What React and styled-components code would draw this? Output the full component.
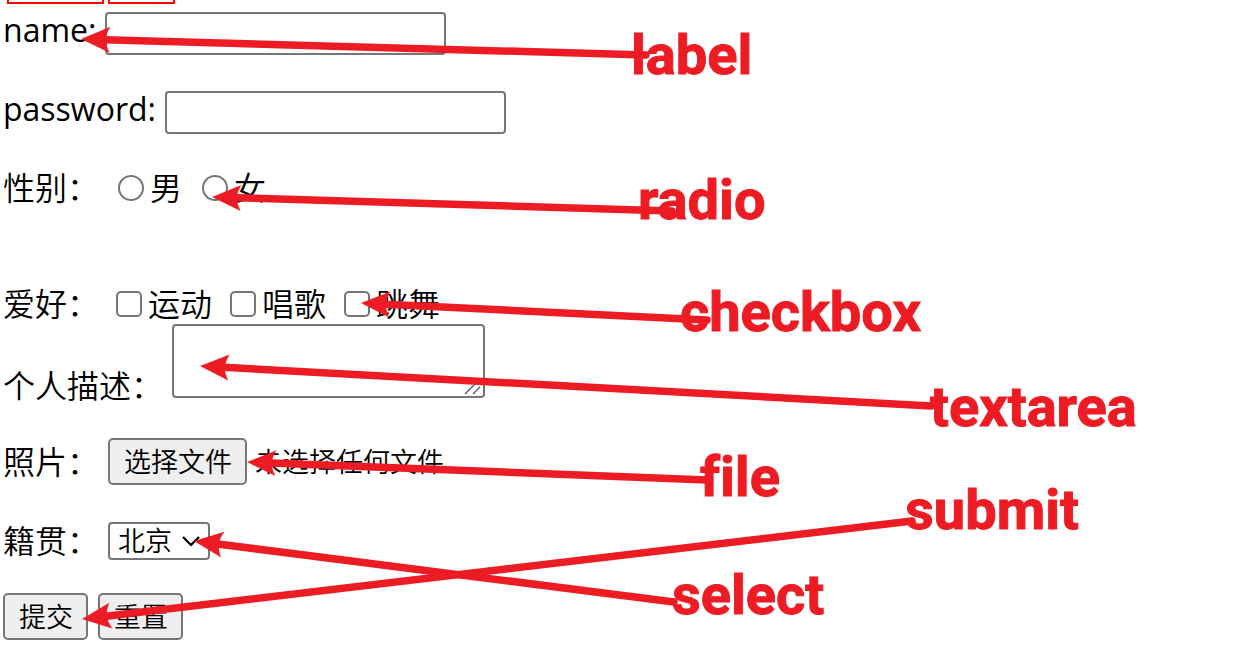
import React, { useRef, useState } from "react";
import styled, { createGlobalStyle } from "styled-components";

const GlobalStyle = createGlobalStyle`
  * { box-sizing: border-box; }
  body {
    margin: 0;
    background: #fff;
    color: #000;
    font-family: "Open Sans", "Noto Sans CJK SC", sans-serif;
    font-size: 32px;
    line-height: 40px;
  }
`;

const Page = styled.main`
  position: relative;
  min-height: 100vh;
  overflow: hidden;
`;

const BoxStrip = styled.div`
  display: flex;
  gap: 4px;
  padding-left: 7px;
`;

const RedBox = styled.div`
  width: ${(p) => p.$width}px;
  height: 4px;
  border: 2px solid #f00;
  border-top: 0;
`;

const Form = styled.form`
  display: flex;
  flex-direction: column;
  padding: 8px 3px 20px;
  font-weight: 350;
`;

const Row = styled.div`
  display: flex;
  align-items: ${(p) => p.$align || "center"};
  gap: ${(p) => p.$gap || 0}px;
  margin-top: ${(p) => p.$space || 0}px;
`;

const FieldLabel = styled.label`
  white-space: pre;
  margin-right: 9px;
`;

const LatinLabel = styled(FieldLabel)`
  font-weight: 400;
  line-height: 36px;
`;

const Caption = styled.span`
  white-space: pre;
`;

const TextInput = styled.input`
  width: 341px;
  height: 43px;
  padding: 2px 4px;
  border: 2px solid #767676;
  border-radius: 4px;
  background: #fff;
  font: inherit;
  font-size: 27px;
`;

const Choice = styled.label`
  display: flex;
  align-items: center;
  gap: 6px;
`;

const Tick = styled.input`
  appearance: none;
  width: 26px;
  height: 26px;
  margin: 0;
  border: 2px solid #767676;
  border-radius: ${(p) => (p.type === "radio" ? "50%" : "5px")};
  background: #fff;
  &:checked { background: #0075ff; box-shadow: inset 0 0 0 4px #fff; }
`;

const Choices = styled.div`
  display: flex;
  gap: ${(p) => p.$gap}px;
  margin-left: ${(p) => p.$indent}px;
`;

const AreaWrap = styled.div`
  position: relative;
  display: flex;
  width: 313px;
  height: 74px;
  margin-bottom: 8px;
`;

const Area = styled.textarea`
  width: 100%;
  height: 100%;
  padding: 4px;
  border: 2px solid #767676;
  border-radius: 4px;
  background: #fff;
  font: inherit;
  font-size: 27px;
  resize: none;
`;

const Grip = styled.svg`
  position: absolute;
  right: 3px;
  bottom: 2px;
  pointer-events: none;
`;

const Button = styled.button`
  height: 47px;
  padding: 0 13px 0 14px;
  border: 2px solid #767676;
  border-radius: 5px;
  background: #efefef;
  color: #000;
  font: inherit;
  font-size: 27px;
  line-height: 40px;
`;

const HiddenFile = styled.input`
  position: absolute;
  width: 1px;
  height: 1px;
  opacity: 0;
  pointer-events: none;
`;

const FileName = styled.span`
  font-size: 27px;
`;

const SelectWrap = styled.div`
  position: relative;
  display: flex;
`;

const Select = styled.select`
  appearance: none;
  width: 102px;
  height: 38px;
  padding: 0 0 0 8px;
  border: 2px solid #767676;
  border-radius: 4px;
  background: #fff;
  color: #000;
  font: inherit;
  font-size: 27px;
  line-height: 34px;
`;

const Chevron = styled.svg`
  position: absolute;
  right: 10px;
  top: 13px;
  pointer-events: none;
`;

const Arrows = styled.svg`
  position: absolute;
  inset: 0;
  width: 100%;
  height: 100%;
  pointer-events: none;
`;

const Note = styled.span`
  position: absolute;
  left: ${(p) => p.$x}px;
  top: ${(p) => p.$y}px;
  color: #ed1c24;
  font: 700 56px/56px Roboto, sans-serif;
  font-variant-ligatures: none;
  -webkit-text-stroke: 1px #ed1c24;
  pointer-events: none;
`;

const notes = [
  { text: "label", x: 631, y: 27, from: [646, 55], to: [81, 39] },
  { text: "radio", x: 638, y: 172, from: [672, 211], to: [212, 197] },
  { text: "checkbox", x: 680, y: 284, from: [707, 320], to: [361, 303] },
  { text: "textarea", x: 930, y: 379, from: [931, 406], to: [200, 366] },
  { text: "file", x: 700, y: 449, from: [707, 480], to: [247, 462] },
  { text: "submit", x: 905, y: 482, from: [912, 521], to: [82, 619] },
  { text: "select", x: 672, y: 567, from: [674, 602], to: [194, 541] },
];

function Arrow({ from, to }) {
  const dx = from[0] - to[0];
  const dy = from[1] - to[1];
  const length = Math.hypot(dx, dy);
  const angle = (Math.atan2(dy, dx) * 180) / Math.PI;
  return (
    <g transform={`translate(${to[0]} ${to[1]}) rotate(${angle})`}>
      <path d="M0 0 L29 -13 Q25 -6 25 0 Q25 6 29 13 Z" fill="#ed1c24" />
      <path d={`M24 0 H${length}`} stroke="#ed1c24" strokeWidth="7.5" strokeLinecap="round" />
    </g>
  );
}

export default function App() {
  const fileRef = useRef(null);
  const [fileName, setFileName] = useState("未选择任何文件");
  return (
    <Page>
      <GlobalStyle />
      <BoxStrip>
        <RedBox $width={97} />
        <RedBox $width={67} />
      </BoxStrip>
      <Form onSubmit={(e) => e.preventDefault()}>
        <Row $align="flex-start">
          <LatinLabel htmlFor="name">name:</LatinLabel>
          <TextInput id="name" type="text" />
        </Row>
        <Row $space={36} $align="flex-start">
          <LatinLabel htmlFor="password">password:</LatinLabel>
          <TextInput id="password" type="password" />
        </Row>
        <Row $space={34}>
          <Caption>性别：</Caption>
          <Choices $gap={20} $indent={19}>
            <Choice><Tick type="radio" name="gender" />男</Choice>
            <Choice><Tick type="radio" name="gender" />女</Choice>
          </Choices>
        </Row>
        <Row $space={76}>
          <Caption>爱好：</Caption>
          <Choices $gap={18} $indent={17}>
            <Choice><Tick type="checkbox" />运动</Choice>
            <Choice><Tick type="checkbox" />唱歌</Choice>
            <Choice><Tick type="checkbox" />跳舞</Choice>
          </Choices>
        </Row>
        <Row $align="flex-end">
          <FieldLabel htmlFor="about">个人描述：</FieldLabel>
          <AreaWrap>
            <Area id="about" />
            <Grip width="18" height="14" viewBox="0 0 18 14">
              <path d="M1 12 L11 2 M9 12 L16 5" stroke="#555" strokeWidth="1.3" fill="none" />
            </Grip>
          </AreaWrap>
        </Row>
        <Row $space={32}>
          <FieldLabel htmlFor="photo">照片：</FieldLabel>
          <Row $gap={8}>
            <Button type="button" onClick={() => fileRef.current.click()}>选择文件</Button>
            <FileName>{fileName}</FileName>
            <HiddenFile
              id="photo"
              type="file"
              ref={fileRef}
              onChange={(e) => setFileName(e.target.files[0]?.name || "未选择任何文件")}
            />
          </Row>
        </Row>
        <Row $space={36}>
          <FieldLabel htmlFor="origin">籍贯：</FieldLabel>
          <SelectWrap>
            <Select id="origin">
              <option>北京</option>
            </Select>
            <Chevron width="18" height="12" viewBox="0 0 18 12">
              <path d="M1 2 L9 10 L17 2" stroke="#000" strokeWidth="2.2" fill="none" />
            </Chevron>
          </SelectWrap>
        </Row>
        <Row $space={32} $gap={10}>
          <Button type="submit">提交</Button>
          <Button type="reset">重置</Button>
        </Row>
      </Form>
      <Arrows aria-hidden="true">
        {notes.map((n) => <Arrow key={n.text} from={n.from} to={n.to} />)}
      </Arrows>
      {notes.map((n) => <Note key={n.text} $x={n.x} $y={n.y}>{n.text}</Note>)}
    </Page>
  );
}
